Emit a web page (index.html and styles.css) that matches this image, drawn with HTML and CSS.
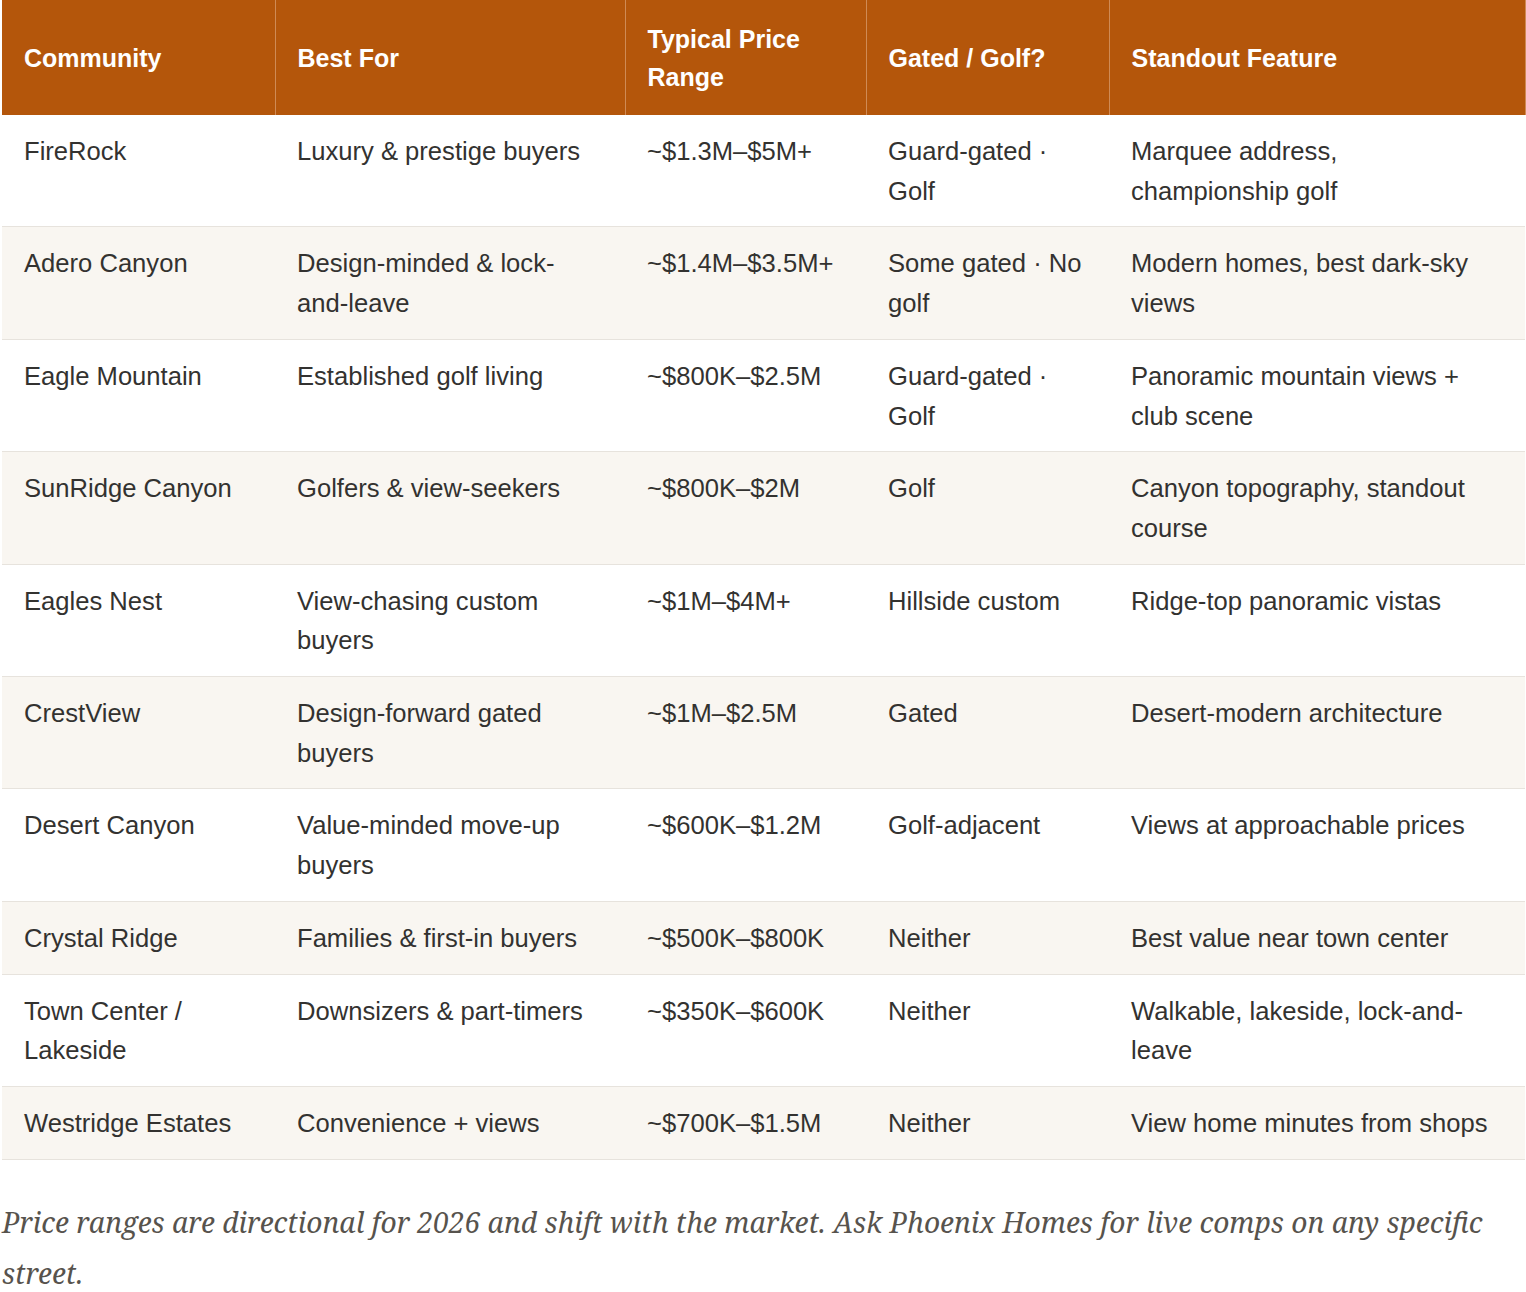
FILE: index.html
```html
<!DOCTYPE html>
<html lang="en">
<head>
<meta charset="utf-8">
<title>Communities</title>
<link rel="stylesheet" href="styles.css">
</head>
<body>
<div class="page">
<table class="compare">
  <colgroup>
    <col class="c1"><col class="c2"><col class="c3"><col class="c4"><col class="c5">
  </colgroup>
  <thead>
    <tr>
      <th>Community</th>
      <th>Best For</th>
      <th>Typical Price Range</th>
      <th>Gated / Golf?</th>
      <th>Standout Feature</th>
    </tr>
  </thead>
  <tbody>
    <tr><td>FireRock</td><td>Luxury &amp; prestige buyers</td><td>~$1.3M–$5M+</td><td>Guard-gated · Golf</td><td>Marquee address, championship golf</td></tr>
    <tr><td>Adero Canyon</td><td>Design-minded &amp; lock-and-leave</td><td>~$1.4M–$3.5M+</td><td>Some gated · No golf</td><td>Modern homes, best dark-sky views</td></tr>
    <tr><td>Eagle Mountain</td><td>Established golf living</td><td>~$800K–$2.5M</td><td>Guard-gated · Golf</td><td>Panoramic mountain views + club scene</td></tr>
    <tr><td>SunRidge Canyon</td><td>Golfers &amp; view-seekers</td><td>~$800K–$2M</td><td>Golf</td><td>Canyon topography, standout course</td></tr>
    <tr><td>Eagles Nest</td><td>View-chasing custom buyers</td><td>~$1M–$4M+</td><td>Hillside custom</td><td>Ridge-top panoramic vistas</td></tr>
    <tr><td>CrestView</td><td>Design-forward gated buyers</td><td>~$1M–$2.5M</td><td>Gated</td><td>Desert-modern architecture</td></tr>
    <tr><td>Desert Canyon</td><td>Value-minded move-up buyers</td><td>~$600K–$1.2M</td><td>Golf-adjacent</td><td>Views at approachable prices</td></tr>
    <tr><td>Crystal Ridge</td><td>Families &amp; first-in buyers</td><td>~$500K–$800K</td><td>Neither</td><td>Best value near town center</td></tr>
    <tr><td>Town Center / Lakeside</td><td>Downsizers &amp; part-timers</td><td>~$350K–$600K</td><td>Neither</td><td>Walkable, lakeside, lock-and-leave</td></tr>
    <tr><td>Westridge Estates</td><td>Convenience + views</td><td>~$700K–$1.5M</td><td>Neither</td><td>View home minutes from shops</td></tr>
  </tbody>
</table>
<p class="note">Price ranges are directional for 2026 and shift with the market. Ask Phoenix Homes for live comps on any specific street.</p>
</div>
</body>
</html>
```
FILE: styles.css
```css
html, body {
  margin: 0;
  padding: 0;
  background: #ffffff;
}

.page {
  padding: 0 1px 0 2px;
}

.compare {
  width: 1523px;
  border-collapse: collapse;
  table-layout: fixed;
  font-family: "Liberation Sans", Arial, sans-serif;
  color: #333230;
}

.c1 { width: 273px; }
.c2 { width: 350px; }
.c3 { width: 241px; }
.c4 { width: 243px; }
.c5 { width: 416px; }

.compare th {
  background: #b4560b;
  color: #ffffff;
  font-size: 25px;
  line-height: 38px;
  font-weight: 700;
  text-align: left;
  padding: 20px 22px 19px 22px;
  border-right: 1px solid #cf8a55;
  vertical-align: middle;
}

.compare td {
  font-size: 25.6px;
  line-height: 39.7px;
  padding: 17px 22px 15px 22px;
  vertical-align: top;
  border-bottom: 1px solid #e7e3dd;
}

.compare td:last-child {
  padding-right: 32px;
}

.compare tbody tr:nth-child(even) td {
  background: #f9f6f1;
}

.note {
  margin: 37px 0 0 0;
  font-family: "Noto Serif", "DejaVu Serif", "Liberation Serif", serif;
  font-style: italic;
  font-size: 28.2px;
  line-height: 51px;
  color: #57534d;
}
```
